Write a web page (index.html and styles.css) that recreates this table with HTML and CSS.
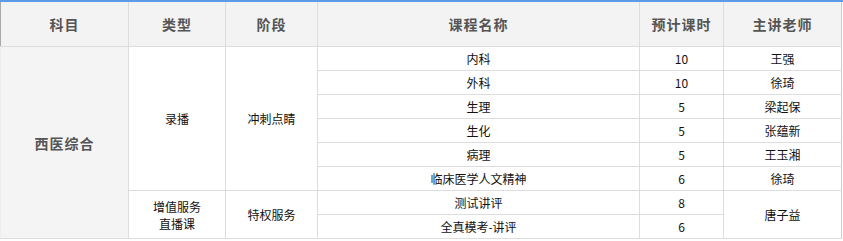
FILE: index.html
```html
<!DOCTYPE html>
<html lang="zh-CN">
<head>
<meta charset="utf-8">
<title>课程安排</title>
<link rel="stylesheet" href="styles.css">
</head>
<body>
<div class="wrap">
<table class="course">
  <colgroup>
    <col class="c1"><col class="c2"><col class="c3"><col class="c4"><col class="c5"><col class="c6">
  </colgroup>
  <thead>
    <tr>
      <th class="first">科目</th>
      <th>类型</th>
      <th>阶段</th>
      <th>课程名称</th>
      <th>预计课时</th>
      <th class="last">主讲老师</th>
    </tr>
  </thead>
  <tbody>
    <tr>
      <td class="subject" rowspan="8">西医综合</td>
      <td rowspan="6">录播</td>
      <td rowspan="6">冲刺点睛</td>
      <td>内科</td>
      <td>10</td>
      <td class="last">王强</td>
    </tr>
    <tr><td>外科</td><td>10</td><td class="last">徐琦</td></tr>
    <tr><td>生理</td><td>5</td><td class="last">梁起保</td></tr>
    <tr><td>生化</td><td>5</td><td class="last">张蕴新</td></tr>
    <tr><td>病理</td><td>5</td><td class="last">王玉湘</td></tr>
    <tr><td>临床医学人文精神</td><td>6</td><td class="last">徐琦</td></tr>
    <tr>
      <td rowspan="2" class="two"><span class="line">增值服务</span><span class="line">直播课</span></td>
      <td rowspan="2">特权服务</td>
      <td>测试讲评</td>
      <td>8</td>
      <td class="last" rowspan="2">唐子益</td>
    </tr>
    <tr><td>全真模考-讲评</td><td>6</td></tr>
  </tbody>
</table>
</div>
</body>
</html>
```
FILE: styles.css
```css
html, body {
  margin: 0;
  padding: 0;
  background: #ffffff;
}

.wrap {
  width: 843px;
  border-top: 2px solid #5b9be8;
  box-sizing: border-box;
}

.course {
  width: 841px;
  border-collapse: collapse;
  table-layout: fixed;
  font-family: "Noto Sans CJK SC", "Liberation Sans", sans-serif;
}

.c1 { width: 128px; }
.c2 { width: 97px; }
.c3 { width: 92px; }
.c4 { width: 322px; }
.c5 { width: 84px; }
.c6 { width: 118px; }

.course th {
  height: 44px;
  padding: 0;
  background: #f2f3f2;
  color: #555555;
  font-size: 14px;
  font-weight: bold;
  letter-spacing: 1px;
  text-align: center;
  vertical-align: middle;
  border-left: 1px solid #dddddd;
  border-right: 1px solid #dddddd;
  border-bottom: 1px solid #dddddd;
  border-top: 0;
}

.course th.first {
  border-left: 1px solid #a9a9a9;
}

.course td {
  height: 23px;
  padding: 0;
  color: #111111;
  font-size: 12px;
  line-height: 14px;
  text-align: center;
  vertical-align: middle;
  border: 1px solid #dddddd;
}

.course .last {
  border-right: 1px solid #cccccc;
}

.course td.subject {
  background: #f4f4f4;
  color: #555555;
  font-size: 14px;
  font-weight: bold;
  letter-spacing: 1px;
  border-left: 1px solid #eeeeee;
}

.course td.two .line {
  display: block;
  font-size: 12px;
  line-height: 17px;
}
```
